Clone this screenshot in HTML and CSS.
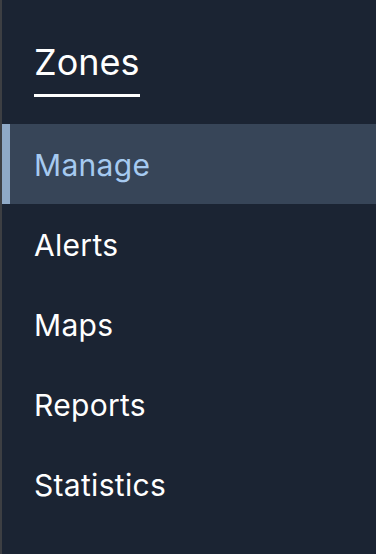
FILE: index.html
```html
<!DOCTYPE html>
<html>
<head>
    <link rel="stylesheet" href="styles.css">
</head>
<body>
    <div class="sidebar">
        <div class="sidebar-head">
            <h1 class="title">Zones</h1>
        </div>
        <ul class="menu">
            <li class="menu-item active">Manage</li>
            <li class="menu-item">Alerts</li>
            <li class="menu-item">Maps</li>
            <li class="menu-item">Reports</li>
            <li class="menu-item">Statistics</li>
        </ul>
    </div>
</body>
</html>
```

FILE: styles.css
```css
html, body {
    margin: 0;
    height: 100%;
}
body {
    font-family: Inter, "Noto Sans", sans-serif;
    background-color: #1b2433;
    color: #ffffff;
}
.sidebar {
    min-height: 100%;
    border-left: 2px solid #3d3f43;
    box-sizing: border-box;
}
.sidebar-head {
    padding: 40px 0 0 32px;
    margin-bottom: 27px;
}
.title {
    display: inline-block;
    margin: 0;
    font-size: 36px;
    font-weight: 400;
    line-height: 44px;
    padding-bottom: 10px;
    border-bottom: 3px solid #ffffff;
}
.menu {
    list-style: none;
    margin: 0;
    padding: 0;
}
.menu-item {
    display: flex;
    align-items: center;
    height: 80px;
    padding-left: 24px;
    padding-top: 2px;
    box-sizing: border-box;
    border-left: 8px solid transparent;
    font-size: 30px;
    letter-spacing: 0.3px;
}
.menu-item.active {
    background-color: #374558;
    border-left-color: #8fa9c6;
    color: #a6caf0;
}
```
